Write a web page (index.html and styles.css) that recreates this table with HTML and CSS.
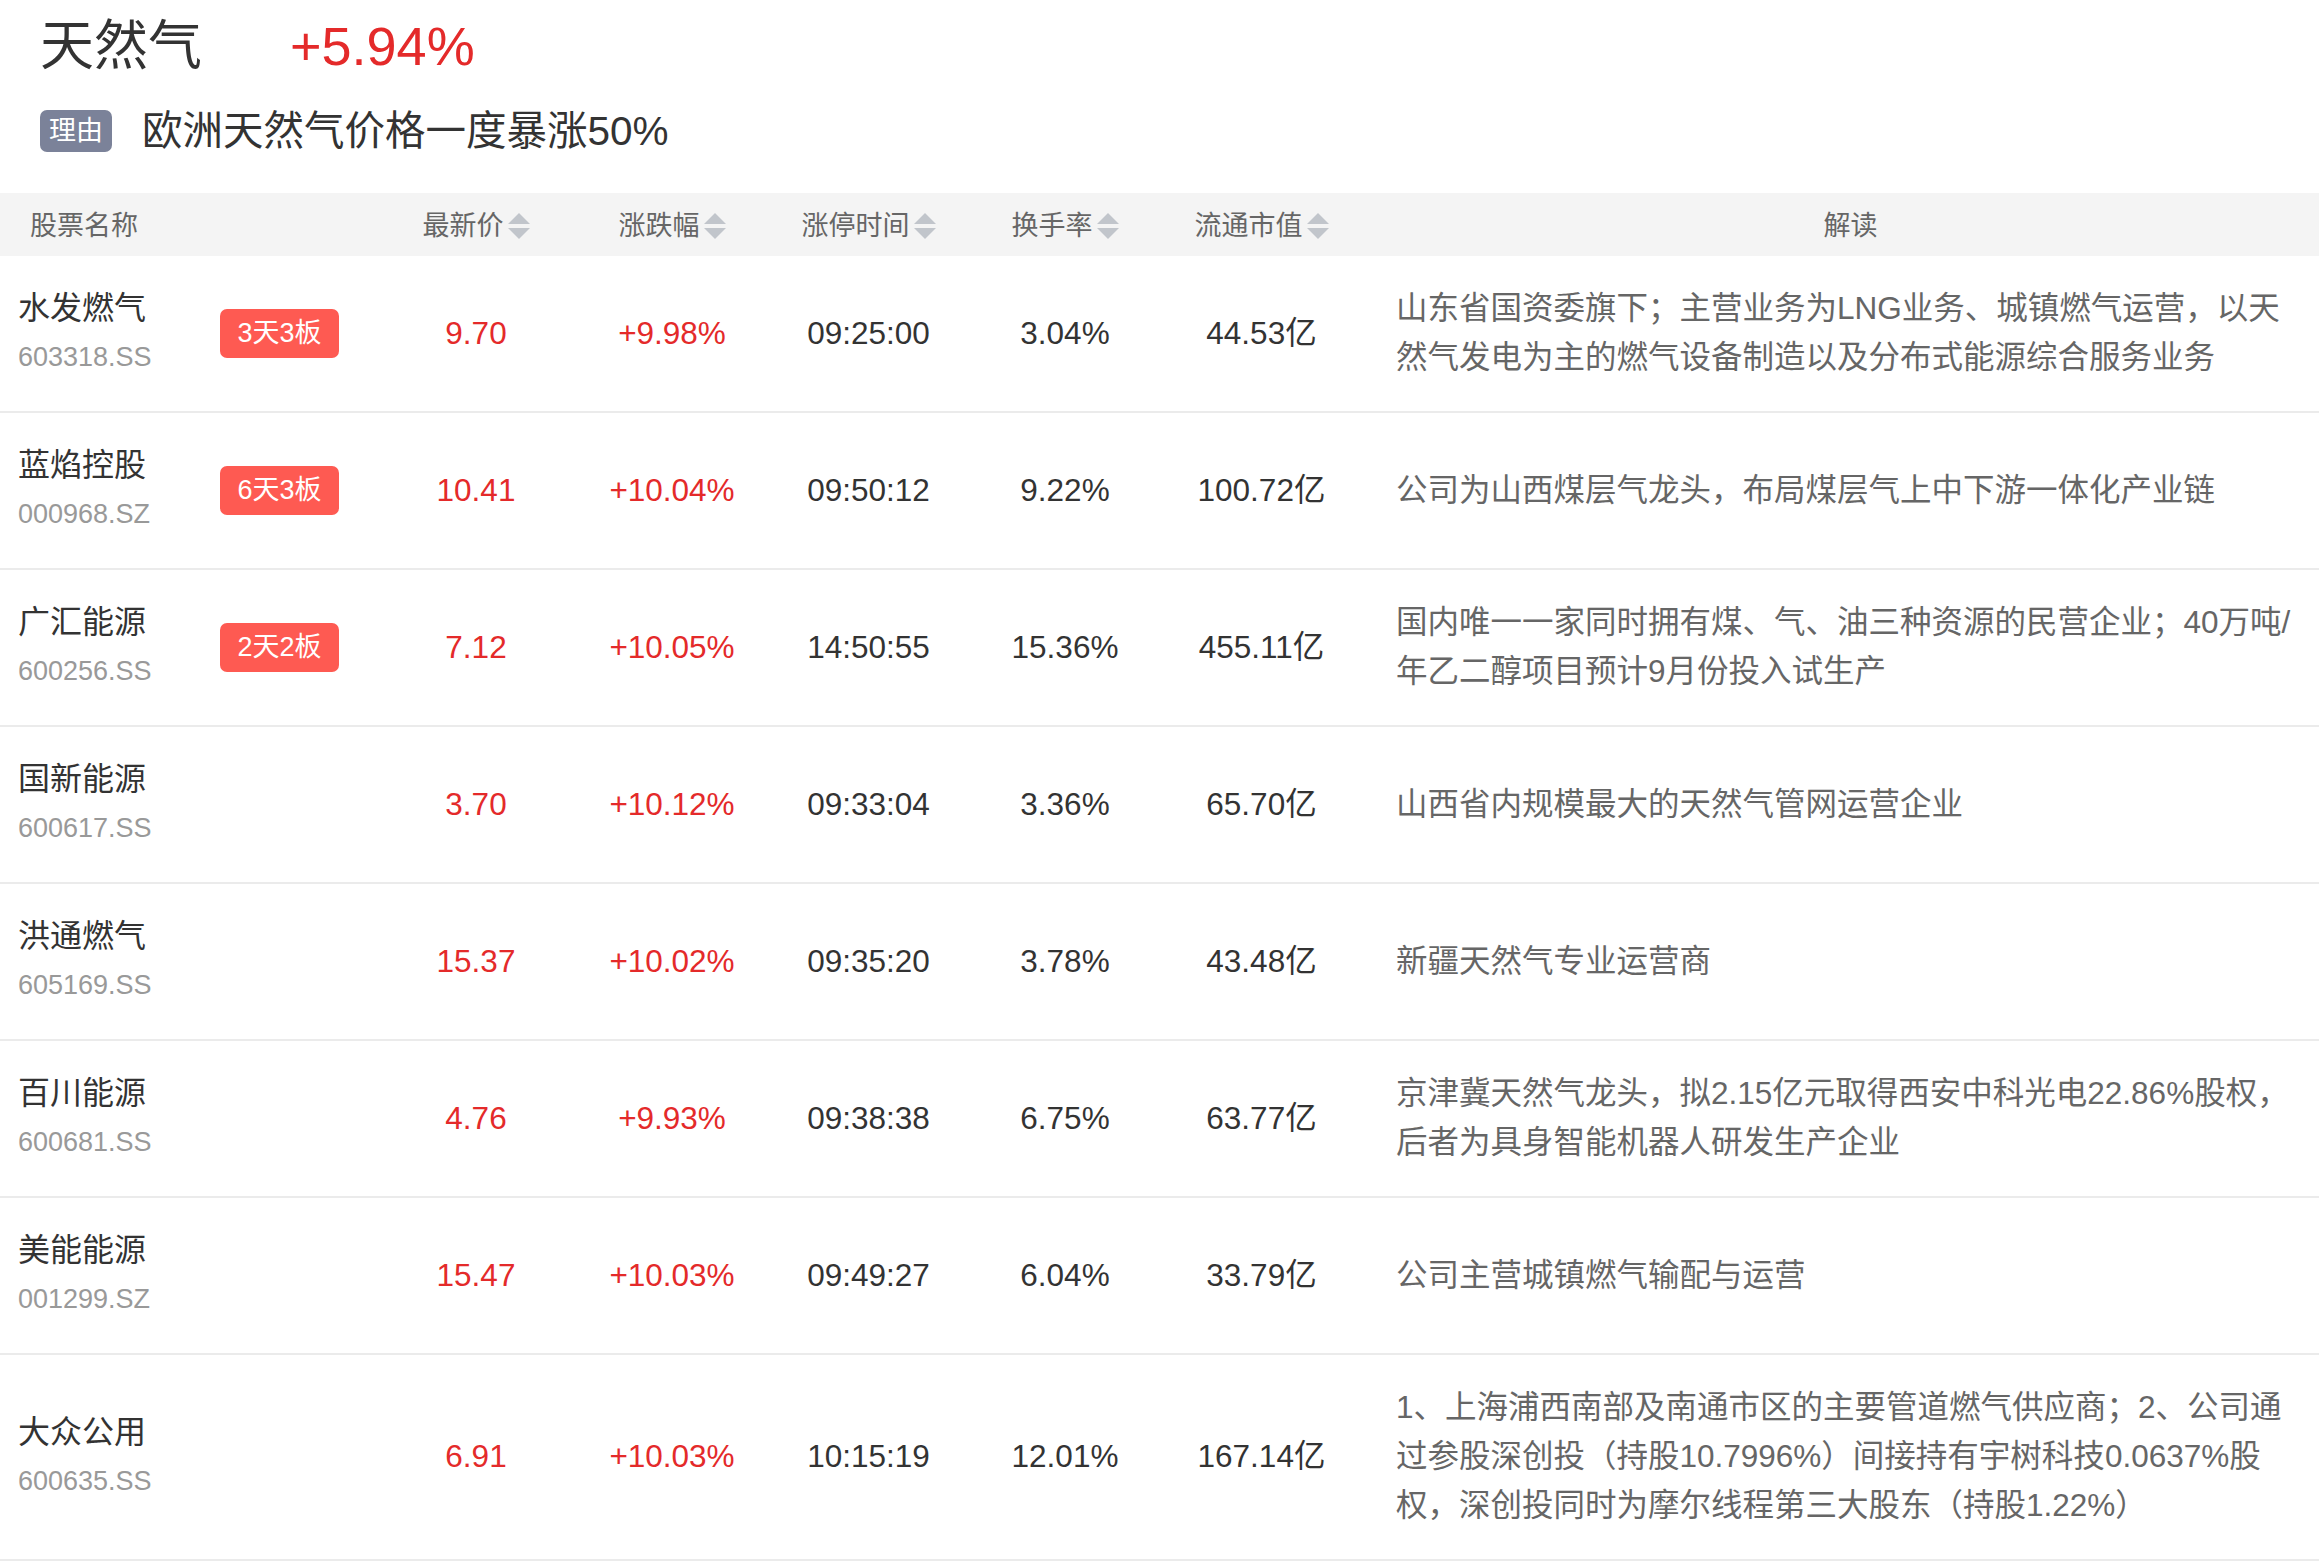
FILE: index.html
```html
<!DOCTYPE html>
<html lang="zh-CN">
<head>
<meta charset="utf-8">
<title>天然气</title>
<link rel="stylesheet" href="styles.css">
</head>
<body>
<div class="page">
  <div class="top">
    <div class="title-row">
      <span class="title">天然气</span>
      <span class="change">+5.94%</span>
    </div>
    <div class="reason-row">
      <span class="reason-tag">理由</span>
      <span class="reason-text">欧洲天然气价格一度暴涨50%</span>
    </div>
  </div>

  <div class="table">
    <div class="row-grid thead">
      <div class="th th-name">股票名称</div>
      <div class="th sortable">最新价<span class="sort"><i class="up-arrow"></i><i class="down-arrow"></i></span></div>
      <div class="th sortable">涨跌幅<span class="sort"><i class="up-arrow"></i><i class="down-arrow"></i></span></div>
      <div class="th sortable">涨停时间<span class="sort"><i class="up-arrow"></i><i class="down-arrow"></i></span></div>
      <div class="th sortable">换手率<span class="sort"><i class="up-arrow"></i><i class="down-arrow"></i></span></div>
      <div class="th sortable">流通市值<span class="sort"><i class="up-arrow"></i><i class="down-arrow"></i></span></div>
      <div class="th th-desc">解读</div>
    </div>

    <div class="row-grid tr">
      <div class="td td-name"><div class="name-block"><div class="name">水发燃气</div><div class="code">603318.SS</div></div><span class="badge">3天3板</span></div>
      <div class="td red">9.70</div>
      <div class="td red">+9.98%</div>
      <div class="td">09:25:00</div>
      <div class="td">3.04%</div>
      <div class="td">44.53亿</div>
      <div class="td td-desc">山东省国资委旗下；主营业务为LNG业务、城镇燃气运营，以天<br>然气发电为主的燃气设备制造以及分布式能源综合服务业务</div>
    </div>

    <div class="row-grid tr">
      <div class="td td-name"><div class="name-block"><div class="name">蓝焰控股</div><div class="code">000968.SZ</div></div><span class="badge">6天3板</span></div>
      <div class="td red">10.41</div>
      <div class="td red">+10.04%</div>
      <div class="td">09:50:12</div>
      <div class="td">9.22%</div>
      <div class="td">100.72亿</div>
      <div class="td td-desc">公司为山西煤层气龙头，布局煤层气上中下游一体化产业链</div>
    </div>

    <div class="row-grid tr">
      <div class="td td-name"><div class="name-block"><div class="name">广汇能源</div><div class="code">600256.SS</div></div><span class="badge">2天2板</span></div>
      <div class="td red">7.12</div>
      <div class="td red">+10.05%</div>
      <div class="td">14:50:55</div>
      <div class="td">15.36%</div>
      <div class="td">455.11亿</div>
      <div class="td td-desc">国内唯一一家同时拥有煤、气、油三种资源的民营企业；40万吨/<br>年乙二醇项目预计9月份投入试生产</div>
    </div>

    <div class="row-grid tr">
      <div class="td td-name"><div class="name-block"><div class="name">国新能源</div><div class="code">600617.SS</div></div></div>
      <div class="td red">3.70</div>
      <div class="td red">+10.12%</div>
      <div class="td">09:33:04</div>
      <div class="td">3.36%</div>
      <div class="td">65.70亿</div>
      <div class="td td-desc">山西省内规模最大的天然气管网运营企业</div>
    </div>

    <div class="row-grid tr">
      <div class="td td-name"><div class="name-block"><div class="name">洪通燃气</div><div class="code">605169.SS</div></div></div>
      <div class="td red">15.37</div>
      <div class="td red">+10.02%</div>
      <div class="td">09:35:20</div>
      <div class="td">3.78%</div>
      <div class="td">43.48亿</div>
      <div class="td td-desc">新疆天然气专业运营商</div>
    </div>

    <div class="row-grid tr">
      <div class="td td-name"><div class="name-block"><div class="name">百川能源</div><div class="code">600681.SS</div></div></div>
      <div class="td red">4.76</div>
      <div class="td red">+9.93%</div>
      <div class="td">09:38:38</div>
      <div class="td">6.75%</div>
      <div class="td">63.77亿</div>
      <div class="td td-desc">京津冀天然气龙头，拟2.15亿元取得西安中科光电22.86%股权，<br>后者为具身智能机器人研发生产企业</div>
    </div>

    <div class="row-grid tr">
      <div class="td td-name"><div class="name-block"><div class="name">美能能源</div><div class="code">001299.SZ</div></div></div>
      <div class="td red">15.47</div>
      <div class="td red">+10.03%</div>
      <div class="td">09:49:27</div>
      <div class="td">6.04%</div>
      <div class="td">33.79亿</div>
      <div class="td td-desc">公司主营城镇燃气输配与运营</div>
    </div>

    <div class="row-grid tr">
      <div class="td td-name"><div class="name-block"><div class="name">大众公用</div><div class="code">600635.SS</div></div></div>
      <div class="td red">6.91</div>
      <div class="td red">+10.03%</div>
      <div class="td">10:15:19</div>
      <div class="td">12.01%</div>
      <div class="td">167.14亿</div>
      <div class="td td-desc">1、上海浦西南部及南通市区的主要管道燃气供应商；2、公司通<br>过参股深创投（持股10.7996%）间接持有宇树科技0.0637%股<br>权，深创投同时为摩尔线程第三大股东（持股1.22%）</div>
    </div>
  </div>
</div>
</body>
</html>
```

FILE: styles.css
```css
html, body {
  margin: 0;
  padding: 0;
  background: #ffffff;
}

body {
  font-family: "Liberation Sans", "Noto Sans CJK SC", sans-serif;
  color: #333333;
}

.page {
  width: 2319px;
}

/* ---------- top section ---------- */
.top {
  padding: 19px 40px 41px;
}

.title-row {
  display: flex;
  align-items: baseline;
  height: 54px;
  font-size: 54px;
  line-height: 54px;
}

.title {
  color: #333333;
}

.change {
  color: #e42a2a;
  margin-left: 88px;
}

.reason-row {
  display: flex;
  align-items: center;
  margin-top: 37px;
  height: 42px;
}

.reason-tag {
  display: flex;
  align-items: center;
  justify-content: center;
  width: 72px;
  height: 42px;
  border-radius: 7px;
  background: #7b8299;
  color: #ffffff;
  font-size: 27px;
  line-height: 42px;
}

.reason-text {
  margin-left: 30px;
  font-size: 40.5px;
  line-height: 42px;
  color: #333333;
}

/* ---------- table ---------- */
.row-grid {
  display: grid;
  grid-template-columns: 378px 196px 196px 197px 196px 197px 1fr;
  align-items: center;
}

.thead {
  box-sizing: border-box;
  height: 63px;
  padding-top: 3px;
  background: #f4f4f4;
  font-size: 27px;
  color: #666666;
}

.th {
  display: flex;
  align-items: center;
  justify-content: center;
  line-height: 60px;
}

.th-name {
  justify-content: flex-start;
  padding-left: 30px;
}

.th-desc {
  padding-left: 36px;
  padding-right: 14px;
}

.sort {
  display: inline-flex;
  flex-direction: column;
  align-items: center;
  margin-left: 4px;
  gap: 4px;
}

.up-arrow {
  display: block;
  width: 0;
  height: 0;
  border-left: 11px solid transparent;
  border-right: 11px solid transparent;
  border-bottom: 11px solid #c1c5cb;
}

.down-arrow {
  display: block;
  width: 0;
  height: 0;
  border-left: 11px solid transparent;
  border-right: 11px solid transparent;
  border-top: 11px solid #c1c5cb;
}

.tr {
  padding: 28px 0 29px;
  border-bottom: 2px solid #ebebeb;
}

.td {
  text-align: center;
  font-size: 31.5px;
  line-height: 49px;
  color: #333333;
}

.td.red {
  color: #e42a2a;
}

.td-name {
  display: flex;
  align-items: center;
  text-align: left;
}

.name-block {
  width: 220px;
  padding-left: 18px;
  box-sizing: border-box;
}

.name {
  font-size: 32px;
  line-height: 49px;
  color: #333333;
}

.code {
  font-size: 27px;
  line-height: 49px;
  color: #999999;
}

.badge {
  display: inline-flex;
  align-items: center;
  justify-content: center;
  width: 119px;
  height: 49px;
  border-radius: 7px;
  background: #fe5a52;
  color: #ffffff;
  font-size: 27px;
  line-height: 49px;
}

.td-desc {
  text-align: left;
  padding-left: 36px;
  padding-right: 14px;
  font-size: 31.5px;
  line-height: 49px;
  color: #666666;
}
```
